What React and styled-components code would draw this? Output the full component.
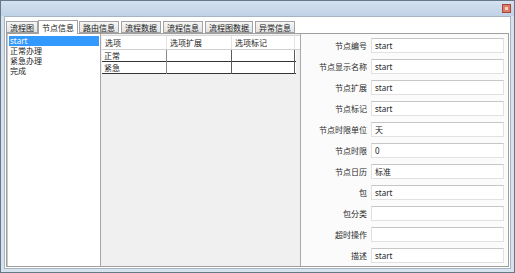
import React from "react";
import styled, { createGlobalStyle } from "styled-components";

const Global = createGlobalStyle`
  html, body { margin: 0; padding: 0; background: #ffffff; }
  body { font-family: "Noto Sans", "Noto Sans CJK SC", sans-serif; }
  * { box-sizing: border-box; }
`;

const Window = styled.div`
  width: 515px;
  height: 273px;
  border: 1px solid #66798a;
  background: #d6e2ee;
  display: flex;
  flex-direction: column;
  font-family: "Noto Sans", "Noto Sans CJK SC", sans-serif;
  font-size: 8px;
  color: #1a1a1a;
`;

const TitleBar = styled.div`
  height: 15px;
  flex: none;
  display: flex;
  align-items: center;
  justify-content: flex-end;
  padding-right: 3px;
  background: linear-gradient(#d3e1f0, #c0d2e6);
`;

const CloseBtn = styled.div`
  width: 9px;
  height: 9px;
  border: 1px solid #a4483a;
  background: #de7b68;
  display: flex;
  align-items: center;
  justify-content: center;
  &::after {
    content: "";
    width: 3px;
    height: 3px;
    background: #f6d2c6;
  }
`;

const Body = styled.div`
  flex: 1;
  margin: 0 3px 3px;
  border: 1px solid #a7b5c3;
  background: #ffffff;
  padding: 4px 1px 1px 0;
  display: flex;
  flex-direction: column;
  min-height: 0;
`;

const TabStrip = styled.div`
  height: 12px;
  flex: none;
  display: flex;
  align-items: flex-end;
  gap: 2px;
  padding-left: 1px;
  position: relative;
  z-index: 1;
`;

const Tab = styled.div`
  height: ${(p) => (p.$active ? "14px" : "12px")};
  margin: ${(p) => (p.$active ? "0 -1px -1px -2px" : "0")};
  padding: ${(p) => (p.$active ? "1px 3px 0" : "1px 3px 0")};
  border: 1px solid #a3a3a3;
  border-bottom: ${(p) => (p.$active ? "none" : "1px solid #a3a3a3")};
  background: ${(p) =>
    p.$active ? "#ffffff" : "linear-gradient(#f6f6f6, #e2e2e2)"};
  line-height: 10px;
  white-space: nowrap;
  display: flex;
  align-items: center;
  color: #222;
`;

const Panel = styled.div`
  flex: 1;
  min-height: 0;
  margin-left: 1px;
  border: 1px solid #9f9f9f;
  display: flex;
  background: #ffffff;
`;

const List = styled.div`
  width: 94px;
  flex: none;
  border-left: 1px solid #c9c9c9;
  border-right: 1px solid #a7a7a7;
  background: #ffffff;
  padding: 2px 1px 0 1px;
`;

const ListItem = styled.div`
  height: 10px;
  line-height: 10px;
  padding-left: 1px;
  background: ${(p) => (p.$selected ? "#3399ff" : "transparent")};
  color: ${(p) => (p.$selected ? "#ffffff" : "#1a1a1a")};
`;

const Middle = styled.div`
  width: 200px;
  flex: none;
  background: #f0f0f0;
  border-right: 1px solid #a9a9a9;
  padding: 1px 0 0 1px;
`;

const GridHeader = styled.div`
  display: grid;
  grid-template-columns: 65px 65px 63px 1fr;
  height: 15px;
  background: #ffffff;
  border-top: 1px solid #d8d8d8;
  border-bottom: 1px solid #d0d0d0;
`;

const HeadCell = styled.div`
  padding-left: 3px;
  line-height: 13px;
  border-right: 1px solid #e3e3e3;
  &:last-child { border-right: none; }
`;

const GridRow = styled.div`
  display: grid;
  grid-template-columns: 65px 65px 63px;
  width: 194px;
  height: 12px;
  background: #ffffff;
  border-bottom: 1px solid #333333;
`;

const Cell = styled.div`
  padding-left: 2px;
  line-height: 12px;
  border-right: 1px solid #5a5a5a;
  &:first-child { border-right: 1px solid #8a8a8a; }
`;

const Form = styled.div`
  flex: 1;
  background: #fbfbfb;
  display: grid;
  grid-template-columns: 66px 1fr;
  grid-auto-rows: 15px;
  column-gap: 4px;
  row-gap: 6px;
  padding: 4px 4px 0 0;
  align-content: start;
`;

const Label = styled.div`
  text-align: right;
  line-height: 15px;
  white-space: nowrap;
  color: #2a2a2a;
`;

const Field = styled.div`
  background: #ffffff;
  border: 1px solid #e1e1e1;
  border-top-color: #c6c6c6;
  padding-left: 3px;
  line-height: 13px;
  color: #222;
`;

const tabs = ["流程图", "节点信息", "路由信息", "流程数据", "流程信息", "流程图数据", "异常信息"];
const items = ["start", "正常办理", "紧急办理", "完成"];
const fields = [
  ["节点编号", "start"],
  ["节点显示名称", "start"],
  ["节点扩展", "start"],
  ["节点标记", "start"],
  ["节点时限单位", "天"],
  ["节点时限", "0"],
  ["节点日历", "标准"],
  ["包", "start"],
  ["包分类", ""],
  ["超时操作", ""],
  ["描述", "start"],
];

export default function App() {
  return (
    <>
      <Global />
      <Window>
        <TitleBar>
          <CloseBtn />
        </TitleBar>
        <Body>
          <TabStrip>
            {tabs.map((t, i) => (
              <Tab key={t} $active={i === 1}>
                {t}
              </Tab>
            ))}
          </TabStrip>
          <Panel>
            <List>
              {items.map((it, i) => (
                <ListItem key={it} $selected={i === 0}>
                  {it}
                </ListItem>
              ))}
            </List>
            <Middle>
              <GridHeader>
                <HeadCell>选项</HeadCell>
                <HeadCell>选项扩展</HeadCell>
                <HeadCell>选项标记</HeadCell>
                <HeadCell />
              </GridHeader>
              {["正常", "紧急"].map((r) => (
                <GridRow key={r}>
                  <Cell>{r}</Cell>
                  <Cell />
                  <Cell />
                </GridRow>
              ))}
            </Middle>
            <Form>
              {fields.map(([l, v]) => (
                <React.Fragment key={l}>
                  <Label>{l}</Label>
                  <Field>{v}</Field>
                </React.Fragment>
              ))}
            </Form>
          </Panel>
        </Body>
      </Window>
    </>
  );
}
